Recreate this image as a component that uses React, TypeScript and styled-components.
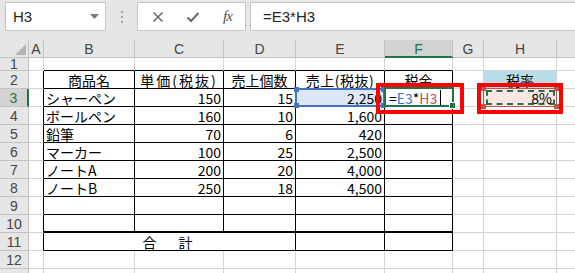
import React from "react";
import styled, { createGlobalStyle, css } from "styled-components";

const GlobalStyle = createGlobalStyle`
  html, body {
    margin: 0;
    padding: 0;
    background: #ffffff;
  }
  * {
    box-sizing: border-box;
  }
`;

const GREEN = "#217346";
const GRID = "#d4d4d4";
const HEAD_LINE = "#c3c3c3";
const UI_FONT = `"Liberation Sans", Arial, sans-serif`;
const CELL_FONT = `"Noto Sans CJK JP", "Noto Sans", sans-serif`;

const COLS = ["A", "B", "C", "D", "E", "F", "G", "H", "I"];

const Frame = styled.div`
  width: 575px;
  height: 273px;
  overflow: hidden;
  background: #e6e6e6;
`;

const Toolbar = styled.div`
  display: flex;
  align-items: flex-start;
  height: 40px;
  padding-top: 2px;
  font-family: ${UI_FONT};
`;

const NameBox = styled.div`
  display: flex;
  align-items: center;
  justify-content: space-between;
  width: 101px;
  height: 29px;
  margin-left: 5px;
  padding: 0 6px 0 7px;
  background: #fff;
  border: 1px solid #c6c6c6;
  font-size: 15px;
  color: #262626;
`;

const Grip = styled.div`
  display: flex;
  flex-direction: column;
  align-items: center;
  justify-content: center;
  gap: 3px;
  width: 31px;
  height: 29px;

  span {
    width: 2px;
    height: 2px;
    background: #a0a0a0;
  }
`;

const FxBox = styled.div`
  display: flex;
  align-items: center;
  width: 109px;
  height: 29px;
  padding-left: 2px;
  background: #fff;
  border: 1px solid #c6c6c6;
`;

const FxSlot = styled.div`
  display: flex;
  align-items: center;
  justify-content: center;
  width: 35px;
  height: 100%;
  color: #6b6b6b;
`;

const FxLabel = styled.span`
  font-family: "Liberation Serif", "Times New Roman", serif;
  font-style: italic;
  font-size: 15px;
  color: #555;
  letter-spacing: -1px;
`;

const FormulaInput = styled.div`
  flex: 1;
  display: flex;
  align-items: center;
  height: 29px;
  margin-left: 4px;
  margin-right: -2px;
  padding-left: 12px;
  background: #fff;
  border: 1px solid #c6c6c6;
  font-size: 15px;
  color: #262626;
`;

const Sheet = styled.div`
  display: grid;
  grid-template-columns: 29px 15px 91px 89px 72px 89px 68px 31px 73px 73px;
  grid-template-rows: 18px 13px repeat(12, 18px);
  background: #fff;
`;

const Corner = styled.div`
  display: flex;
  align-items: flex-end;
  justify-content: flex-end;
  padding: 0 2px 2px 0;
  background: #e6e6e6;
  border-right: 1px solid ${HEAD_LINE};
  border-bottom: 1px solid ${HEAD_LINE};
`;

const ColHead = styled.div<{ $selected?: boolean }>`
  display: flex;
  align-items: center;
  justify-content: center;
  padding-top: 1px;
  background: ${(p) => (p.$selected ? "#d2d2d2" : "#e6e6e6")};
  border-right: 1px solid ${HEAD_LINE};
  border-bottom: ${(p) => (p.$selected ? `2px solid ${GREEN}` : `1px solid ${HEAD_LINE}`)};
  font-family: ${UI_FONT};
  font-size: 14px;
  color: ${(p) => (p.$selected ? GREEN : "#444")};
`;

const RowHead = styled.div<{ $selected?: boolean }>`
  display: flex;
  align-items: center;
  justify-content: center;
  background: ${(p) => (p.$selected ? "#d2d2d2" : "#e6e6e6")};
  border-right: ${(p) => (p.$selected ? `2px solid ${GREEN}` : `1px solid ${HEAD_LINE}`)};
  border-bottom: 1px solid ${HEAD_LINE};
  font-family: ${UI_FONT};
  font-size: 14px;
  line-height: 16px;
  color: ${(p) => (p.$selected ? GREEN : "#444")};
`;

type Edge = "grid" | "black" | "thick";

const edge = (e: Edge) =>
  e === "thick" ? "2px solid #000" : e === "black" ? "1px solid #000" : `1px solid ${GRID}`;

const Cell = styled.div<{
  $right: Edge;
  $bottom: Edge;
  $align?: "left" | "center" | "right";
  $fill?: string;
  $span?: number;
  $spacing?: number;
}>`
  position: relative;
  display: flex;
  align-items: center;
  justify-content: ${(p) =>
    p.$align === "right" ? "flex-end" : p.$align === "center" ? "center" : "flex-start"};
  padding: 0 2px 0 2px;
  background: ${(p) => p.$fill || "#fff"};
  border-right: ${(p) => edge(p.$right)};
  border-bottom: ${(p) => edge(p.$bottom)};
  font-family: ${CELL_FONT};
  font-size: 14px;
  line-height: 16px;
  color: #000;
  white-space: nowrap;
  letter-spacing: ${(p) => p.$spacing ?? 0}px;
  ${(p) =>
    p.$span &&
    css`
      grid-column: span ${p.$span};
    `}
`;

const Corners = css<{ $c: string }>`
  & > i {
    position: absolute;
    width: 5px;
    height: 5px;
    background: ${(p) => p.$c};
  }
  & > i:nth-child(1) { top: -3px; left: -3px; }
  & > i:nth-child(2) { top: -3px; right: -3px; }
  & > i:nth-child(3) { bottom: -3px; left: -3px; }
  & > i:nth-child(4) { bottom: -3px; right: -3px; }
`;

const RefFrame = styled.div<{ $c: string; $w: number }>`
  position: absolute;
  top: -1px;
  left: -1px;
  right: -1px;
  bottom: -1px;
  border: ${(p) => p.$w}px solid ${(p) => p.$c};
  z-index: 2;
  pointer-events: none;
  ${Corners}
`;

const Marquee = styled.div`
  position: absolute;
  top: 1px;
  left: 2px;
  right: 1px;
  bottom: 1px;
  border: 2px dashed ${GREEN};
  z-index: 2;
`;

const ActiveFrame = styled.div`
  position: absolute;
  top: -2px;
  left: -1px;
  right: -2px;
  bottom: -1px;
  border: 2px solid ${GREEN};
  z-index: 3;

  &::after {
    content: "";
    position: absolute;
    right: -4px;
    bottom: -4px;
    width: 5px;
    height: 5px;
    background: ${GREEN};
    border: 1px solid #fff;
  }
`;

const Callout = styled.div<{ $left: number; $width: number }>`
  position: absolute;
  top: -6px;
  left: ${(p) => p.$left}px;
  width: ${(p) => p.$width}px;
  height: 31px;
  border: 4px solid #ff0000;
  z-index: 6;
`;

const Ref = styled.span<{ $c: string }>`
  color: ${(p) => p.$c};
`;

const Caret = styled.span`
  display: inline-block;
  width: 1px;
  height: 15px;
  margin-left: 3px;
  background: #000;
`;

const EditText = styled.span<{ $pad?: number }>`
  position: relative;
  z-index: 5;
  display: flex;
  align-items: center;
  padding: 0 ${(p) => p.$pad ?? 0}px 0 2px;
`;

const items: [string, number, number, string][] = [
  ["シャーペン", 150, 15, "2,250"],
  ["ボールペン", 160, 10, "1,600"],
  ["鉛筆", 70, 6, "420"],
  ["マーカー", 100, 25, "2,500"],
  ["ノートA", 200, 20, "4,000"],
  ["ノートB", 250, 18, "4,500"],
];

const REF_BLUE = "#4472c4";
const REF_RED = "#c0504d";

function borders(r: number, c: number): { right: Edge; bottom: Edge } {
  const inTable = r >= 2 && r <= 11 && c >= 1 && c <= 5;
  let right: Edge = "grid";
  let bottom: Edge = "grid";
  if (inTable || (c === 0 && r >= 2 && r <= 11)) right = "black";
  if (inTable || (r === 1 && c >= 1 && c <= 5)) bottom = "black";
  if (inTable && r === 10) bottom = "thick";
  return { right, bottom };
}

function renderCell(r: number, c: number) {
  const key = `${r}-${c}`;
  const b = borders(r, c);
  const base = { $right: b.right, $bottom: b.bottom };

  if (r === 11 && c === 1) {
    return (
      <Cell key={key} {...base} $right="black" $span={3} $align="center" $spacing={4}>
        合　計
      </Cell>
    );
  }
  if (r === 11 && (c === 2 || c === 3)) return null;

  if (r === 2) {
    const heads = ["", "商品名", "単価(税抜)", "売上個数", "売上(税抜)", "税金", "", "税率", ""];
    const spacing = c === 2 ? 2 : c === 4 ? 0.5 : 0;
    return (
      <Cell
        key={key}
        {...base}
        $align="center"
        $spacing={spacing}
        $fill={c === 7 ? "#b7dee8" : undefined}
      >
        {heads[c]}
      </Cell>
    );
  }

  if (r >= 3 && r <= 8) {
    const it = items[r - 3];
    if (c === 1) return <Cell key={key} {...base}>{it[0]}</Cell>;
    if (c === 2) return <Cell key={key} {...base} $align="right">{it[1]}</Cell>;
    if (c === 3) return <Cell key={key} {...base} $align="right">{it[2]}</Cell>;
    if (c === 4)
      return (
        <Cell key={key} {...base} $align="right" $fill={r === 3 ? "#dde7f5" : undefined}>
          {it[3]}
          {r === 3 && (
            <RefFrame $c={REF_BLUE} $w={2}>
              <i />
              <i />
              <i />
              <i />
            </RefFrame>
          )}
        </Cell>
      );
    if (r === 3 && c === 5)
      return (
        <Cell key={key} {...base}>
          <ActiveFrame />
          <EditText>
            =<Ref $c={REF_BLUE}>E3</Ref>*<Ref $c={REF_RED}>H3</Ref>
            <Caret />
          </EditText>
          <Callout $left={-9} $width={88} />
        </Cell>
      );
    if (r === 3 && c === 7)
      return (
        <Cell key={key} {...base} $align="right" $fill="#fbe6e6">
          <EditText $pad={2}>8%</EditText>
          <Marquee />
          <RefFrame $c={REF_RED} $w={1}>
            <i />
            <i />
            <i />
            <i />
          </RefFrame>
          <Callout $left={-7} $width={86} />
        </Cell>
      );
  }

  return <Cell key={key} {...base} />;
}

const CloseIcon = () => (
  <svg width="12" height="12" viewBox="0 0 12 12">
    <path d="M1.5 1.5 L10.5 10.5 M10.5 1.5 L1.5 10.5" stroke="#6b6b6b" strokeWidth="1.6" />
  </svg>
);

const CheckIcon = () => (
  <svg width="14" height="12" viewBox="0 0 14 12">
    <path d="M1.5 6.5 L5 10 L12.5 2" stroke="#6b6b6b" strokeWidth="2.2" fill="none" />
  </svg>
);

const DropCaret = () => (
  <svg width="9" height="5" viewBox="0 0 9 5">
    <path d="M0 0 H9 L4.5 5 Z" fill="#7a7a7a" />
  </svg>
);

const CornerMark = () => (
  <svg width="11" height="11" viewBox="0 0 11 11">
    <path d="M11 0 V11 H0 Z" fill="#b5b5b5" />
  </svg>
);

export default function App() {
  const rows = Array.from({ length: 13 }, (_, i) => i + 1);
  return (
    <Frame>
      <GlobalStyle />
      <Toolbar>
        <NameBox>
          H3
          <DropCaret />
        </NameBox>
        <Grip>
          <span />
          <span />
          <span />
        </Grip>
        <FxBox>
          <FxSlot>
            <CloseIcon />
          </FxSlot>
          <FxSlot>
            <CheckIcon />
          </FxSlot>
          <FxSlot>
            <FxLabel>fx</FxLabel>
          </FxSlot>
        </FxBox>
        <FormulaInput>=E3*H3</FormulaInput>
      </Toolbar>
      <Sheet>
        <Corner>
          <CornerMark />
        </Corner>
        {COLS.map((c) => (
          <ColHead key={c} $selected={c === "F"}>
            {c}
          </ColHead>
        ))}
        {rows.map((r) => (
          <React.Fragment key={r}>
            <RowHead $selected={r === 3}>{r}</RowHead>
            {COLS.map((_, c) => renderCell(r, c))}
          </React.Fragment>
        ))}
      </Sheet>
    </Frame>
  );
}
